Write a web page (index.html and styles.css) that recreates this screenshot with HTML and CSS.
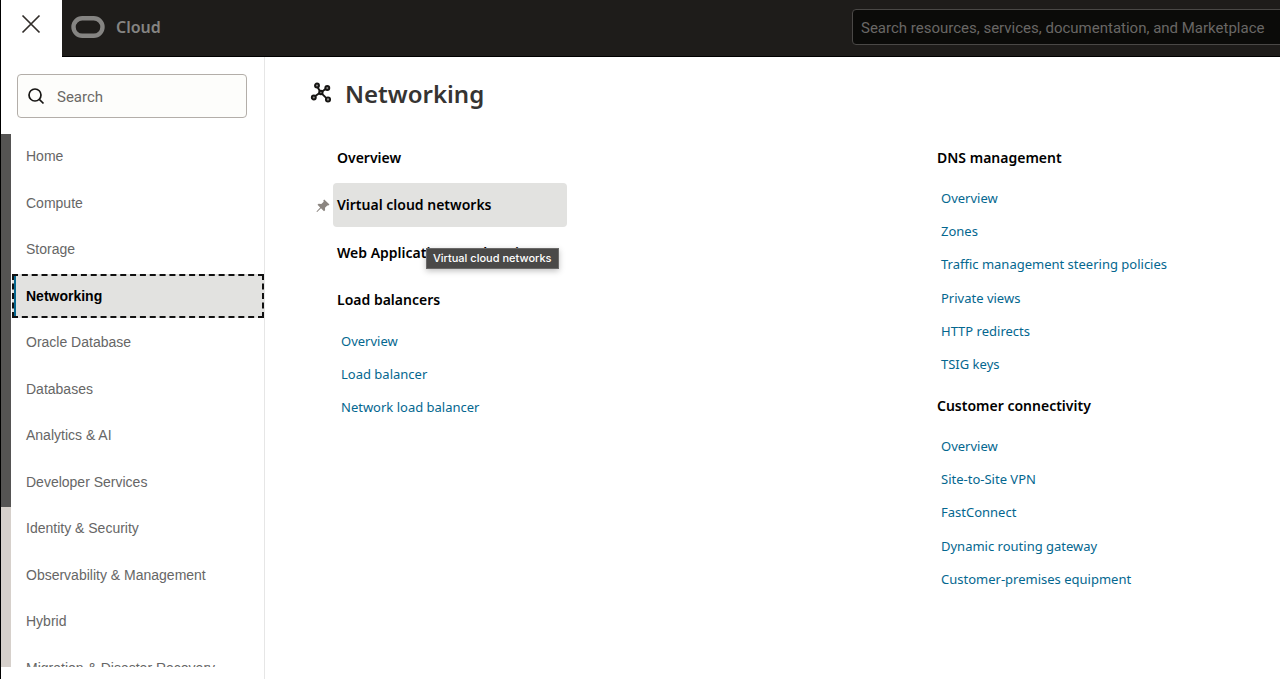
FILE: index.html
```html
<!DOCTYPE html>
<html lang="en">
<head>
<meta charset="utf-8">
<meta name="viewport" content="width=device-width, initial-scale=1">
<title>Cloud - Networking</title>
<link rel="stylesheet" href="styles.css">
</head>
<body>
<div class="app">
  <header class="topbar">
    <button class="close" type="button" aria-label="Close navigation">
      <svg width="20" height="20" viewBox="0 0 20 20" fill="none" stroke="#312d2a" stroke-width="1.7"><path d="M1.5 1.5l17 17M18.500 1.500l-17 17"/></svg>
    </button>
    <a class="brand" href="#">
      <svg width="34" height="22" viewBox="0 0 34 22" fill="none" stroke="#858482" stroke-width="4.400"><rect x="2.500" y="2.300" width="29" height="17.500" rx="8.750"/></svg>
      <span>Cloud</span>
    </a>
    <input class="global-search" type="search" aria-label="Search resources" placeholder="Search resources, services, documentation, and Marketplace">
  </header>
  <div class="body">
    <aside class="sidebar">
      <label class="menu-search">
        <svg width="18" height="18" viewBox="0 0 18 18" fill="none" stroke="#161513" stroke-width="1.700"><circle cx="8" cy="8" r="6"/><path d="M12.300 12.300l4.200 4.200"/></svg>
        <input type="search" aria-label="Search menu" placeholder="Search">
      </label>
      <div class="scroll-area">
        <div class="track"><div class="thumb"></div></div>
        <nav class="menu" aria-label="Main">
          <a href="#">Home</a>
          <a href="#">Compute</a>
          <a href="#">Storage</a>
          <a class="current" href="#" aria-current="page">Networking</a>
          <a href="#">Oracle Database</a>
          <a href="#">Databases</a>
          <a href="#">Analytics &amp; AI</a>
          <a href="#">Developer Services</a>
          <a href="#">Identity &amp; Security</a>
          <a href="#">Observability &amp; Management</a>
          <a href="#">Hybrid</a>
          <a href="#">Migration &amp; Disaster Recovery</a>
        </nav>
      </div>
    </aside>
    <main class="content">
      <h1 class="title">
        <svg width="22" height="22" viewBox="0 0 22 22" fill="#8a8886" stroke="#161513" stroke-width="1.900"><path d="M7.500 5l2.600 4.500M15.800 6.800l-4.200 3.300M5 14.200l4.600-3.300M11.800 11.600l4.600 4.600"/><circle cx="7" cy="3.500" r="2"/><circle cx="17.300" cy="6" r="2"/><circle cx="10.900" cy="10.500" r="1.700"/><circle cx="3.800" cy="15.500" r="2"/><circle cx="18" cy="17.500" r="2.100"/></svg>
        Networking
      </h1>
      <div class="columns">
        <section class="column">
          <div class="heads">
            <a class="head" href="#">Overview</a>
            <a class="head hovered" href="#">Virtual cloud networks
              <svg class="pin" width="14" height="14" viewBox="0 0 14 14" fill="#8b8580"><path d="M8.200 0.500L13.500 5.600L12.300 6.600L11.300 6.400L9 8.800L9.100 11.300L8 12.200L5 9.300L1.200 13L0.500 12.800L0.700 12.200L4.200 8.500L1.500 5.700L2.600 4.700L5.300 4.900L7.700 2.700L7.300 1.500Z"/></svg>
              <span class="tooltip" role="tooltip">Virtual cloud networks</span>
            </a>
            <a class="head" href="#">Web Application Acceleration</a>
            <h2 class="head">Load balancers</h2>
          </div>
          <ul class="links three">
            <li><a href="#">Overview</a></li>
            <li><a href="#">Load balancer</a></li>
            <li><a href="#">Network load balancer</a></li>
          </ul>
        </section>
        <section class="column">
          <h2 class="head">DNS management</h2>
          <ul class="links six">
            <li><a href="#">Overview</a></li>
            <li><a href="#">Zones</a></li>
            <li><a href="#">Traffic management steering policies</a></li>
            <li><a href="#">Private views</a></li>
            <li><a href="#">HTTP redirects</a></li>
            <li><a href="#">TSIG keys</a></li>
          </ul>
          <h2 class="head">Customer connectivity</h2>
          <ul class="links five">
            <li><a href="#">Overview</a></li>
            <li><a href="#">Site-to-Site VPN</a></li>
            <li><a href="#">FastConnect</a></li>
            <li><a href="#">Dynamic routing gateway</a></li>
            <li><a href="#">Customer-premises equipment</a></li>
          </ul>
        </section>
      </div>
    </main>
  </div>
</div>
</body>
</html>
```

FILE: styles.css
```css
* { box-sizing: border-box; }
body { margin: 0; background: #fff; color: #000; font-family: "Noto Sans", sans-serif; }
h1, h2, ul { margin: 0; padding: 0; }
ul { list-style: none; }
a { text-decoration: none; color: inherit; }
svg { flex: none; display: block; }
input { font-family: Roboto, sans-serif; outline: none; }

.app { display: flex; flex-direction: column; height: 100vh; overflow: hidden; border-left: 1px solid #000; }

.topbar { flex: none; display: flex; align-items: center; height: 57px; background: #1e1c1a; border-bottom: 1px solid #000; }
.close { align-self: stretch; display: flex; justify-content: center; width: 61px; margin-bottom: -1px; padding: 14px 2px 0 0; border: 0; background: #fff; }
.brand { display: flex; align-items: center; gap: 11px; margin-left: 9px; padding-bottom: 2px; color: #858482; font-size: 16px; font-weight: 600; line-height: 24px; }
.global-search { width: 440px; height: 36px; margin: 0 -12px 2px auto; padding: 2px 8px 0; border: 1px solid #4a4846; border-radius: 4px; background: #0b0b09; font-size: 15px; }
.global-search::placeholder { color: #696765; opacity: 1; }

.body { flex: 1; display: flex; min-height: 0; }
.sidebar { flex: none; display: flex; flex-direction: column; width: 264px; padding: 17px 0 12px; border-right: 1px solid #e6e6e6; }
.menu-search { flex: none; display: flex; align-items: center; gap: 12px; height: 44px; margin: 0 17px 16px 16px; padding: 0 9px; border: 1px solid #b3aea9; border-radius: 4px; background: #fdfdfb; }
.menu-search input { flex: 1; min-width: 0; padding: 2px 0 0; border: 0; background: none; font-size: 15px; }
.menu-search input::placeholder { color: #6b6966; opacity: 1; }
.scroll-area { flex: 1; display: flex; min-height: 0; overflow: hidden; }
.track { width: 10px; background: #d6d0cb; }
.thumb { height: 70%; background: #555453; }
.menu { flex: 1; display: flex; flex-direction: column; justify-content: space-between; height: 556px; padding-left: 1px; font: 14px "Liberation Sans", Arial, sans-serif; color: #666; }
.menu a { display: flex; align-items: center; height: 44px; padding-left: 14px; }
.menu .current { border: 2px dashed #111; padding-left: 12px; background: #e2e2e0; box-shadow: inset 2px 0 #04668e; color: #000; font-weight: 700; }

.content { flex: 1; min-width: 0; padding: 17px 0 0 45px; }
.title { display: flex; align-items: center; gap: 13px; height: 38px; font-size: 24px; font-weight: 600; color: #363432; }
.columns { display: grid; grid-template-columns: 600px 1fr; margin: 23px 0 0 23px; }
.column { display: flex; flex-direction: column; gap: 2px; min-width: 0; }
.heads { display: flex; flex-direction: column; justify-content: space-between; min-height: 187px; }
.head { position: relative; display: flex; align-items: center; width: 234px; height: 44px; padding-left: 4px; border-radius: 4px; font-size: 14px; font-weight: 600; white-space: nowrap; }
.hovered { z-index: 1; background: #e2e2e0; }
.pin { position: absolute; left: -17px; top: 16px; }
.tooltip { position: absolute; left: 93px; top: 65px; padding: 0 6px; border: 1px solid #6a6968; background: #4a4948; box-shadow: 0 2px 6px rgba(0, 0, 0, .25); color: #fff; font: 500 11px/19px Inter, sans-serif; }
.links { display: grid; grid-auto-rows: 1fr; align-items: center; padding-left: 8px; font-size: 13px; color: #04678f; }
.three { height: 100px; }
.five { height: 167px; }
.six { height: 200px; }
```
